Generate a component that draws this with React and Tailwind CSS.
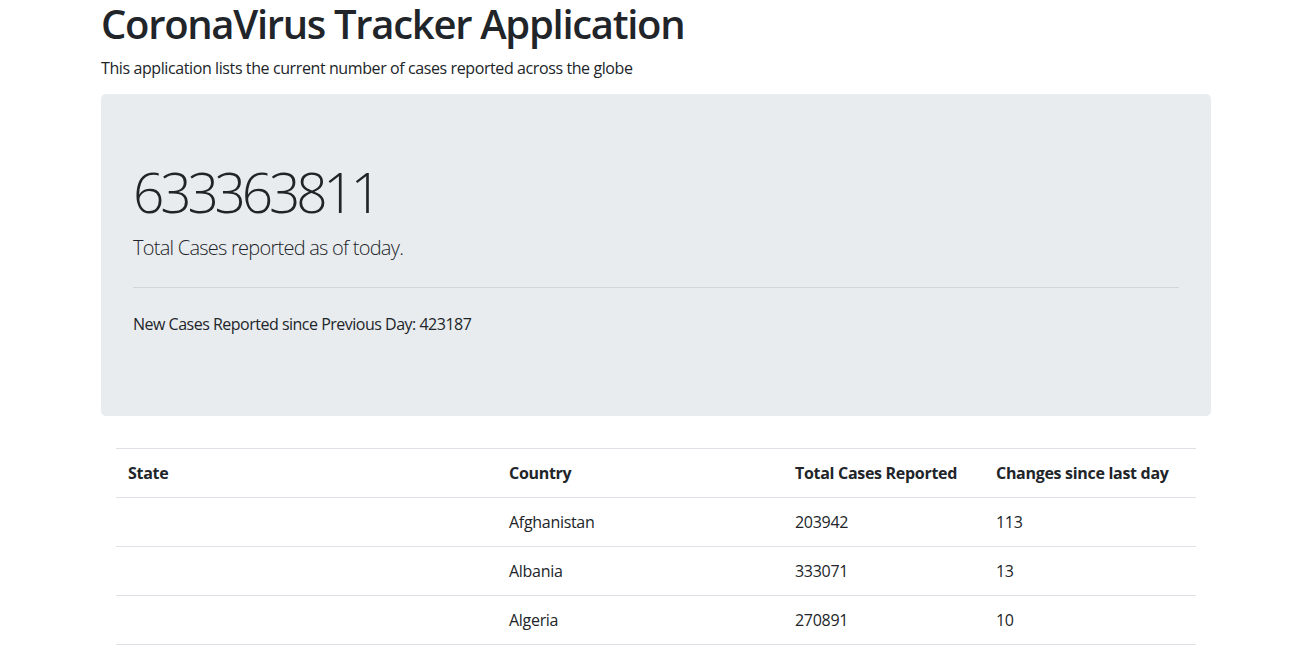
const rows = [
  { state: "", country: "Afghanistan", total: 203942, diff: 113 },
  { state: "", country: "Albania", total: 333071, diff: 13 },
  { state: "", country: "Algeria", total: 270891, diff: 10 },
  { state: "", country: "Andorra", total: 46824, diff: 0 },
]

export default function App() {
  return (
    <div className="min-h-screen bg-white text-[#212529] font-['Open_Sans',sans-serif]">
      <div className="ml-[86px] w-[1140px] px-[15px]">
        <h1 className="text-[40px] leading-[48px] font-semibold mb-2 tracking-[-1.3px]">
          CoronaVirus Tracker Application
        </h1>
        <p className="text-base leading-6 mb-[14px] tracking-[-0.4px]">
          This application lists the current number of cases reported across the globe
        </p>

        <div className="bg-[#e9ecef] rounded-[4.8px] px-8 py-16 mb-8">
          <h2 className="text-[55px] leading-[67px] font-light mb-2 tracking-[-4.2px]">633363811</h2>
          <p className="text-xl leading-[30px] font-light tracking-[-0.75px]">
            Total Cases reported as of today.
          </p>
          <hr className="my-6 border-0 border-t border-[#d2d4d7]" />
          <p className="text-base leading-6 mb-4 tracking-[-0.5px]">
            New Cases Reported since Previous Day: 423187
          </p>
        </div>

        <div className="px-[15px]">
          <table className="w-full border-collapse text-base leading-6 tracking-[-0.3px]">
            <thead>
              <tr className="border-t border-[#dee2e6]">
                <th className="w-[381px] p-3 text-left font-bold">State</th>
                <th className="w-[286px] p-3 text-left font-bold">Country</th>
                <th className="w-[201px] p-3 text-left font-bold">Total Cases Reported</th>
                <th className="p-3 text-left font-bold">Changes since last day</th>
              </tr>
            </thead>
            <tbody>
              {rows.map((r) => (
                <tr key={r.country} className="border-t border-[#dee2e6]">
                  <td className="p-3">{r.state}</td>
                  <td className="p-3">{r.country}</td>
                  <td className="p-3">{r.total}</td>
                  <td className="p-3">{r.diff}</td>
                </tr>
              ))}
            </tbody>
          </table>
        </div>
      </div>
    </div>
  )
}
